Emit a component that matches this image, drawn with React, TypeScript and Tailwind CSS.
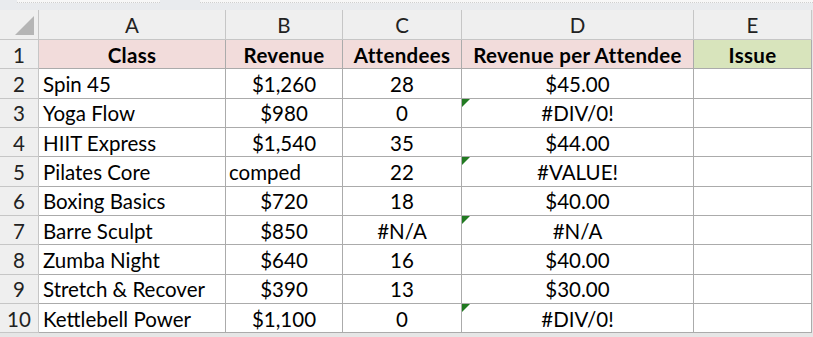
const rows: { a: string; b: string; bLeft?: boolean; c: string; d: string; flag?: boolean }[] = [
  { a: "Spin 45", b: "$1,260", c: "28", d: "$45.00" },
  { a: "Yoga Flow", b: "$980", c: "0", d: "#DIV/0!", flag: true },
  { a: "HIIT Express", b: "$1,540", c: "35", d: "$44.00" },
  { a: "Pilates Core", b: "comped", bLeft: true, c: "22", d: "#VALUE!", flag: true },
  { a: "Boxing Basics", b: "$720", c: "18", d: "$40.00" },
  { a: "Barre Sculpt", b: "$850", c: "#N/A", d: "#N/A", flag: true },
  { a: "Zumba Night", b: "$640", c: "16", d: "$40.00" },
  { a: "Stretch & Recover", b: "$390", c: "13", d: "$30.00" },
  { a: "Kettlebell Power", b: "$1,100", c: "0", d: "#DIV/0!", flag: true },
];

const cell = "border-r border-b border-[#ababab] flex items-center pt-[2px] bg-white";
const rowHead = "border-r border-b border-[#c6c6c6] bg-[#efefef] flex items-center justify-center pt-[2px] text-[#222]";

export default function App() {
  return (
    <div className="w-[813px] h-[337px] bg-[#e6e6e6] overflow-hidden text-[20.5px] text-black" style={{ fontFamily: "Lato, 'Noto Sans', sans-serif" }}>
      {/* formula bar remnant */}
      <div className="h-[10px] bg-[#e9ebee] flex">
        <div className="ml-[17px] w-[143px] h-[3px] bg-[#f7f7f7] border-b border-dotted border-[#cfcfcf]" />
        <div className="ml-[40px] flex-1 h-[3px] bg-[#f7f7f7] border-b border-dotted border-[#cfcfcf]" />
      </div>

      <div className="grid grid-cols-[39px_187px_117px_119px_232px_118px] grid-rows-[30px_repeat(10,29.33px)]">
        {/* column letters */}
        <div className="border-r border-b border-[#c6c6c6] bg-[#efefef] relative">
          <svg className="absolute right-[4px] bottom-[4px]" width="19" height="19" viewBox="0 0 19 19">
            <polygon points="19,0 19,19 0,19" fill="#b5b5b5" />
          </svg>
        </div>
        {["A", "B", "C", "D", "E"].map((l) => (
          <div key={l} className="border-r border-b border-[#c6c6c6] bg-[#efefef] flex items-center justify-center pt-[2px] text-[#222]">
            {l}
          </div>
        ))}

        {/* header row */}
        <div className={rowHead}>1</div>
        {["Class", "Revenue", "Attendees", "Revenue per Attendee"].map((h) => (
          <div key={h} className={`${cell} !bg-[#f2dcdb] justify-center font-bold tracking-[0.3px]`}>
            {h}
          </div>
        ))}
        <div className={`${cell} !bg-[#d8e4bc] justify-center font-bold tracking-[0.3px]`}>Issue</div>

        {rows.map((r, i) => (
          <div key={r.a} className="contents">
            <div className={rowHead}>{i + 2}</div>
            <div className={`${cell} pl-[4px]`}>{r.a}</div>
            <div className={`${cell} ${r.bLeft ? "pl-[3px]" : "justify-center"}`}>{r.b}</div>
            <div className={`${cell} justify-center`}>{r.c}</div>
            <div className={`${cell} justify-center relative`}>
              {r.flag && (
                <svg className="absolute left-0 top-0" width="8" height="8" viewBox="0 0 8 8">
                  <polygon points="0,0 8,0 0,8" fill="#217a21" />
                </svg>
              )}
              {r.d}
            </div>
            <div className={cell} />
          </div>
        ))}
      </div>
    </div>
  );
}
